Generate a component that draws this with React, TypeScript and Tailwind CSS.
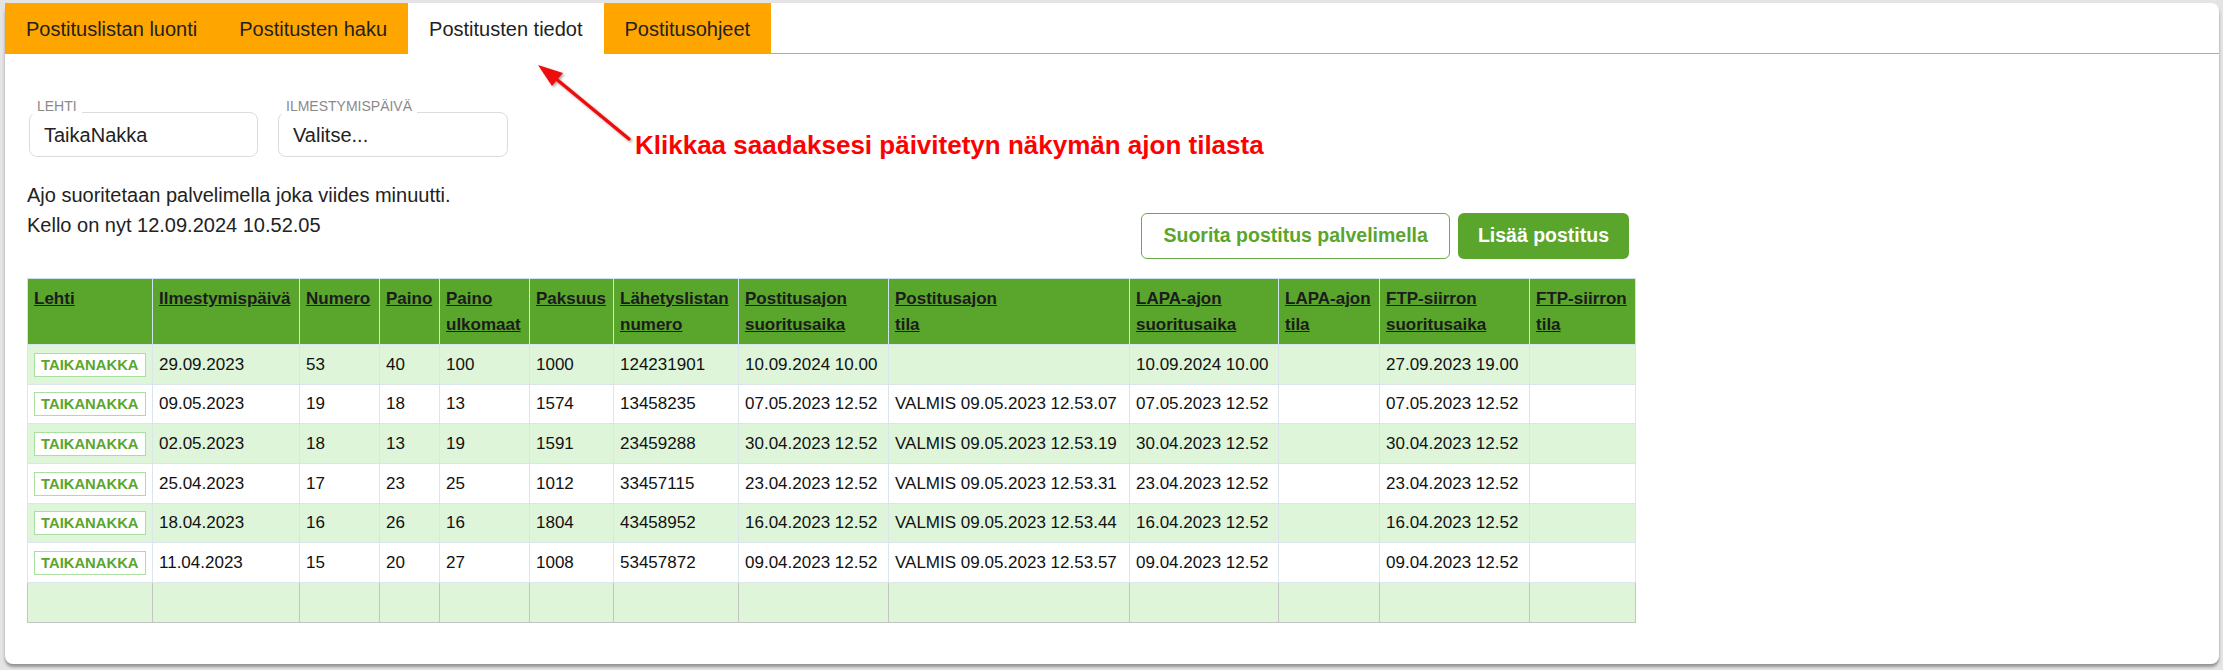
import React from "react";

const cols = [125, 147, 80, 60, 90, 84, 125, 150, 241, 149, 101, 150, 106];

const headers: React.ReactNode[] = [
  "Lehti",
  "Ilmestymispäivä",
  "Numero",
  "Paino",
  <>Paino<br />ulkomaat</>,
  "Paksuus",
  <>Lähetyslistan<br />numero</>,
  <>Postitusajon<br />suoritusaika</>,
  <>Postitusajon<br />tila</>,
  <>LAPA-ajon<br />suoritusaika</>,
  <>LAPA-ajon<br />tila</>,
  <>FTP-siirron<br />suoritusaika</>,
  <>FTP-siirron<br />tila</>,
];

const rows: string[][] = [
  ["29.09.2023", "53", "40", "100", "1000", "124231901", "10.09.2024 10.00", "", "10.09.2024 10.00", "", "27.09.2023 19.00", ""],
  ["09.05.2023", "19", "18", "13", "1574", "13458235", "07.05.2023 12.52", "VALMIS 09.05.2023 12.53.07", "07.05.2023 12.52", "", "07.05.2023 12.52", ""],
  ["02.05.2023", "18", "13", "19", "1591", "23459288", "30.04.2023 12.52", "VALMIS 09.05.2023 12.53.19", "30.04.2023 12.52", "", "30.04.2023 12.52", ""],
  ["25.04.2023", "17", "23", "25", "1012", "33457115", "23.04.2023 12.52", "VALMIS 09.05.2023 12.53.31", "23.04.2023 12.52", "", "23.04.2023 12.52", ""],
  ["18.04.2023", "16", "26", "16", "1804", "43458952", "16.04.2023 12.52", "VALMIS 09.05.2023 12.53.44", "16.04.2023 12.52", "", "16.04.2023 12.52", ""],
  ["11.04.2023", "15", "20", "27", "1008", "53457872", "09.04.2023 12.52", "VALMIS 09.05.2023 12.53.57", "09.04.2023 12.52", "", "09.04.2023 12.52", ""],
];

const tabs = ["Postituslistan luonti", "Postitusten haku", "Postitusten tiedot", "Postitusohjeet"];

export default function App() {
  return (
    <div className="w-[2223px] h-[670px] bg-[#e4e4e4] pt-[3px] pl-[5px] pr-[4px] pb-[6px] font-['Liberation_Sans',Arial,sans-serif] text-[#222]">
      <div className="relative h-full bg-white rounded-[8px] shadow-[0_3px_3px_rgba(0,0,0,0.35)]">
        {/* Tabs */}
        <div className="flex h-[51px]">
          {tabs.map((t, i) => (
            <div
              key={t}
              className={
                i === 2
                  ? "flex items-center px-[21px] bg-white text-[20px] text-[#222]"
                  : "flex items-center px-[21px] bg-[#ffa500] text-[20px] text-[#222]"
              }
            >
              {t}
            </div>
          ))}
          <div className="flex-1 border-b border-[#f0a520] rounded-tr-[8px]" />
        </div>

        <div className="pl-[22px]">
          {/* Fields */}
          <div className="flex gap-[20px] mt-[58px] ml-[2px]">
            <div className="relative w-[229px] h-[45px] border border-[#dcdcdc] rounded-[8px] flex items-center pl-[14px] text-[20px] text-[#222]">
              <span className="absolute top-[-15px] left-[2px] px-[5px] bg-white text-[14px] leading-[16px] text-[#8a8a8a]">LEHTI</span>
              TaikaNakka
            </div>
            <div className="relative w-[230px] h-[45px] border border-[#dcdcdc] rounded-[8px] flex items-center pl-[14px] text-[20px] text-[#222]">
              <span className="absolute top-[-15px] left-[2px] px-[5px] bg-white text-[14px] leading-[16px] text-[#8a8a8a]">ILMESTYMISPÄIVÄ</span>
              Valitse...
            </div>
          </div>

          {/* Info + buttons */}
          <div className="flex justify-between w-[1608px] mt-[23px]">
            <div className="text-[20px] leading-[30px] text-[#222]">
              <div>Ajo suoritetaan palvelimella joka viides minuutti.</div>
              <div>Kello on nyt 12.09.2024 10.52.05</div>
            </div>
            <div className="flex gap-[8px] mt-[33px] pr-[6px] self-start">
              <button className="h-[46px] px-[21px] border border-[#6aad45] rounded-[6px] bg-white text-[#5aa52c] font-bold text-[19.5px]">
                Suorita postitus palvelimella
              </button>
              <button className="h-[46px] px-[20px] rounded-[6px] bg-[#5aa52c] text-white font-bold text-[19.5px]">
                Lisää postitus
              </button>
            </div>
          </div>

          {/* Table */}
          <table className="mt-[19px] table-fixed border-collapse w-[1608px] text-[17px]">
            <colgroup>
              {cols.map((w, i) => (
                <col key={i} style={{ width: w }} />
              ))}
            </colgroup>
            <thead>
              <tr>
                {headers.map((h, i) => (
                  <th
                    key={i}
                    className="bg-[#5aa52c] border border-[#cde3f0] border-b-0 text-left align-top font-bold leading-[26px] pt-[7px] pb-[6px] px-[6px] h-[66px]"
                  >
                    <span className="underline text-[#1c1c1c] whitespace-nowrap">{h}</span>
                  </th>
                ))}
              </tr>
            </thead>
            <tbody>
              {rows.map((r, ri) => (
                <tr key={ri} className={ri % 2 === 0 ? "bg-[#def5d9]" : "bg-white"}>
                  <td className="border border-[#dde5ec] px-[6px] h-[39.7px] align-middle">
                    <span className="inline-flex items-center h-[24px] px-[6px] border border-[#a9e0a1] bg-white text-[#5aa52c] font-bold text-[14.8px]">
                      TAIKANAKKA
                    </span>
                  </td>
                  {r.map((c, ci) => (
                    <td key={ci} className="border border-[#dde5ec] px-[6px] h-[39.7px] align-middle whitespace-nowrap text-[#111]">
                      {c}
                    </td>
                  ))}
                </tr>
              ))}
              <tr className="bg-[#def5d9]">
                {cols.map((_, i) => (
                  <td key={i} className="border border-[#c4c4c4] border-t-[#dde5ec] h-[39.7px]" />
                ))}
              </tr>
            </tbody>
          </table>
        </div>

        {/* Annotation overlay */}
        <svg className="absolute left-[520px] top-[50px]" width="130" height="100" viewBox="0 0 130 100">
          <defs>
            <filter id="sh" x="-20%" y="-20%" width="140%" height="140%">
              <feDropShadow dx="1.5" dy="1.5" stdDeviation="1" floodColor="#000" floodOpacity="0.35" />
            </filter>
          </defs>
          <g filter="url(#sh)">
            <line x1="104" y1="86" x2="30" y2="25" stroke="#ee1111" strokeWidth="3.5" strokeLinecap="round" />
            <polygon points="13,12 38,20 27,33" fill="#ee1111" />
          </g>
        </svg>
        <div className="absolute left-[630px] top-[126px] text-[26px] font-bold text-[#ff0000] whitespace-nowrap leading-[32px]">
          Klikkaa saadaksesi päivitetyn näkymän ajon tilasta
        </div>
      </div>
    </div>
  );
}
